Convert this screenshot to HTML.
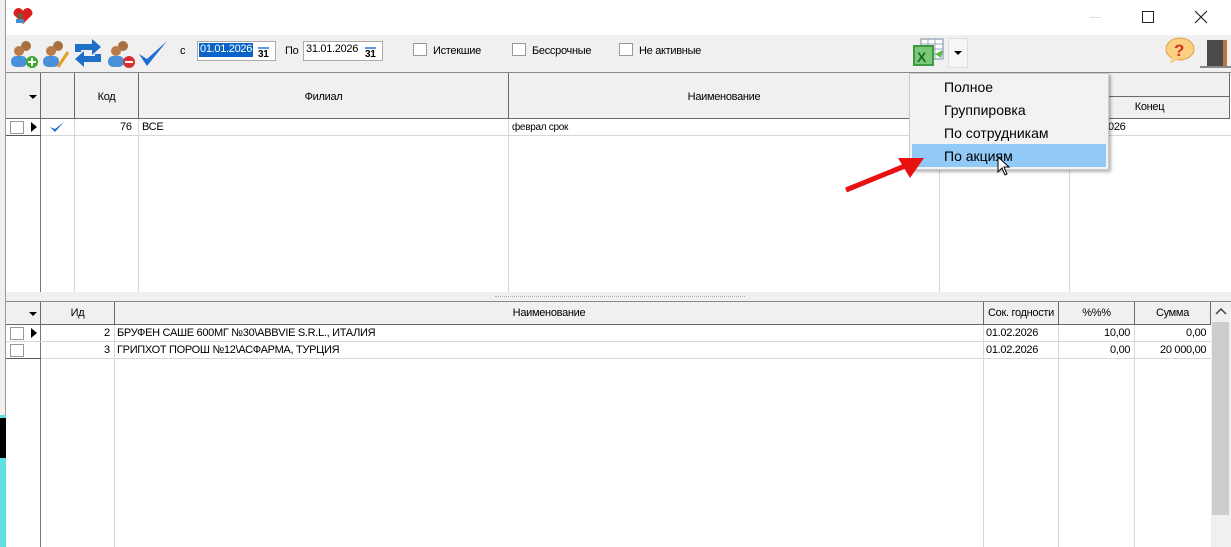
<!DOCTYPE html>
<html><head><meta charset="utf-8"><style>
*{box-sizing:border-box;margin:0;padding:0}
body{width:1231px;height:547px;overflow:hidden;background:#fff;font-family:"Liberation Sans",sans-serif;font-size:11px;color:#000;position:relative}
.a{position:absolute}
.vl{position:absolute;width:1px;background:#d8d8d8}
.hd{position:absolute;background:#f0f0f0;border-right:1px solid #6a6a6a;border-bottom:1px solid #6a6a6a;text-align:center;font-size:11px;letter-spacing:-0.3px}
.t{position:absolute;white-space:nowrap;font-size:11px;letter-spacing:-0.3px}
.cb{position:absolute;width:14px;height:13px;border:1px solid #999;background:#fff}
.tri{position:absolute;width:0;height:0;border-top:5px solid transparent;border-bottom:5px solid transparent;border-left:6px solid #000}
.dn{position:absolute;width:0;height:0;border-left:4px solid transparent;border-right:4px solid transparent;border-top:4px solid #000}
</style></head><body>
<div class="a" style="left:0;top:0;width:6px;height:547px;background:#f0f0f0;border-right:1px solid #999"></div>
<div class="a" style="left:0;top:415px;width:6px;height:132px;background:#5ee0e0"></div>
<div class="a" style="left:0;top:418px;width:6px;height:40px;background:#000"></div>
<svg class="a" style="left:12px;top:7px" width="22" height="18"><path d="M11 17 L2 8 A4.5 4.5 0 0 1 11 4 A4.5 4.5 0 0 1 20 8 Z" fill="#d82020"/><circle cx="8" cy="9" r="3" fill="#7a5a3a"/><rect x="4" y="12" width="8" height="4" fill="#4a8ad0"/></svg>
<div class="a" style="left:1090px;top:17px;width:11px;height:1px;background:#ddd"></div>
<div class="a" style="left:1142px;top:11px;width:12px;height:12px;border:1px solid #222"></div>
<svg class="a" style="left:1194px;top:10px" width="14" height="14"><path d="M1 1L13 13M13 1L1 13" stroke="#222" stroke-width="1.2"/></svg>
<div class="a" style="left:6px;top:35px;width:1225px;height:38px;background:#f0f0f0"></div>
<svg class="a" style="left:8px;top:38px" width="160" height="32">
<g><circle cx="18" cy="8" r="5" fill="#a87040"/><circle cx="11" cy="13" r="5" fill="#b87a48"/><rect x="3" y="18" width="16" height="11" rx="5" fill="#4a90d8"/><circle cx="24" cy="24" r="6" fill="#3aaa30"/><path d="M20 24h8M24 20v8" stroke="#fff" stroke-width="2"/></g>
<g transform="translate(32,0)"><circle cx="18" cy="8" r="5" fill="#a87040"/><circle cx="11" cy="13" r="5" fill="#b87a48"/><rect x="3" y="18" width="16" height="11" rx="5" fill="#4a90d8"/><path d="M18 29 L28 14" stroke="#e0a020" stroke-width="3"/></g>
<g transform="translate(65,0)"><path d="M2 14 V6 H19 V1 L28 9 L19 17 V12 H8 V14Z M28 16 V24 H11 V29 L2 21 L11 13 V18 H22 V16Z" fill="#1e70c8"/></g>
<g transform="translate(97,0)"><circle cx="18" cy="8" r="5" fill="#a87040"/><circle cx="11" cy="13" r="5" fill="#b87a48"/><rect x="3" y="18" width="16" height="11" rx="5" fill="#4a90d8"/><circle cx="24" cy="24" r="6" fill="#d83030"/><path d="M20 24h8" stroke="#fff" stroke-width="2"/></g>
<g transform="translate(130,0)"><path d="M1 16 L9 28 L29 3 L9 21 Z" fill="#1e6ed0"/></g>
</svg>
<div class="t" style="left:180px;top:45px">с</div>
<div class="a" style="left:197px;top:41px;width:79px;height:20px;background:#fff;border:1px solid #aaa"></div>
<div class="a" style="left:199px;top:43px;width:54px;height:14px;background:#0a64c8"></div>
<div class="t" style="left:200px;top:43px;color:#fff">01.01.2026</div>
<div class="t" style="left:258px;top:47px;font-weight:bold;font-size:10px;border-top:2px solid #5a9ad8">31</div>
<div class="t" style="left:285px;top:45px">По</div>
<div class="a" style="left:303px;top:41px;width:80px;height:20px;background:#fff;border:1px solid #aaa"></div>
<div class="t" style="left:306px;top:43px">31.01.2026</div>
<div class="t" style="left:365px;top:47px;font-weight:bold;font-size:10px;border-top:2px solid #5a9ad8">31</div>
<div class="cb" style="left:413px;top:43px"></div><div class="t" style="left:433px;top:45px">Истекшие</div>
<div class="cb" style="left:512px;top:43px"></div><div class="t" style="left:532px;top:45px">Бессрочные</div>
<div class="cb" style="left:619px;top:43px"></div><div class="t" style="left:639px;top:45px">Не активные</div>
<svg class="a" style="left:911px;top:38px" width="34" height="30"><rect x="10" y="1" width="22" height="20" fill="#fff" stroke="#7a8aa0"/><path d="M10 6h22M10 11h22M10 16h22M17 1v20M24 1v20" stroke="#9aaac0"/><rect x="2" y="7" width="21" height="21" fill="#3c9a40"/><rect x="4" y="9" width="17" height="17" fill="#7cc87a"/><text x="6" y="24" font-size="14" font-weight="bold" fill="#1e6a22" font-family="Liberation Sans">X</text><path d="M24 16 L32 12 L30 20Z" fill="#5ab84a"/></svg>
<div class="a" style="left:948px;top:38px;width:20px;height:30px;border:1px solid #ddd;background:#f6f6f6"></div>
<div class="dn" style="left:954px;top:51px"></div>
<svg class="a" style="left:1164px;top:36px" width="32" height="30"><ellipse cx="16" cy="13" rx="14" ry="11" fill="#f8d080" stroke="#e0a040"/><path d="M8 21 L6 28 L14 23Z" fill="#f8d080"/><text x="10" y="20" font-size="17" font-weight="bold" fill="#d83020" font-family="Liberation Sans">?</text></svg>
<div class="a" style="left:1207px;top:40px;width:20px;height:28px;background:#4a4a4a;border-right:4px solid #b07a40"></div>
<div class="a" style="left:1200px;top:66px;width:31px;height:2px;background:#888"></div>
<div class="a" style="left:6px;top:72px;width:1225px;height:1px;background:#888"></div>
<div class="hd" style="left:6px;top:73px;width:35px;height:46px"></div><div class="dn" style="left:29px;top:95px"></div>
<div class="hd" style="left:41px;top:73px;width:34px;height:46px"></div>
<div class="hd" style="left:75px;top:73px;width:64px;height:46px;padding-top:18px">Код</div>
<div class="hd" style="left:139px;top:73px;width:370px;height:46px;padding-top:18px">Филиал</div>
<div class="hd" style="left:509px;top:73px;width:431px;height:46px;padding-top:18px">Наименование</div>
<div class="hd" style="left:940px;top:73px;width:290px;height:24px"></div>
<div class="hd" style="left:940px;top:97px;width:130px;height:22px"></div>
<div class="hd" style="left:1070px;top:97px;width:160px;height:22px;padding-top:4px">Конец</div>
<div class="vl" style="left:40px;top:119px;height:173px;background:#777"></div>
<div class="vl" style="left:74px;top:119px;height:173px"></div>
<div class="vl" style="left:138px;top:119px;height:173px"></div>
<div class="vl" style="left:508px;top:119px;height:173px"></div>
<div class="vl" style="left:939px;top:119px;height:173px"></div>
<div class="vl" style="left:1069px;top:119px;height:173px"></div>
<div class="a" style="left:6px;top:135px;width:1225px;height:1px;background:#d8d8d8"></div>
<div class="a" style="left:6px;top:135px;width:35px;height:1px;background:#555"></div>
<div class="cb" style="left:10px;top:121px"></div><div class="tri" style="left:31px;top:122px"></div>
<svg class="a" style="left:49px;top:121px" width="16" height="12"><path d="M1 6 L6 11 L15 1 L6 8Z" fill="#1e6ed0"/></svg>
<div class="t" style="left:120px;top:121px">76</div>
<div class="t" style="left:142px;top:121px">ВСЕ</div>
<div class="t" style="left:512px;top:122px;font-size:10px">феврал срок</div>
<div class="t" style="left:1108px;top:121px">026</div>
<div class="a" style="left:6px;top:292px;width:1225px;height:10px;background:#f0f0f0;border-bottom:1px solid #888"></div>
<div class="a" style="left:495px;top:296px;width:250px;height:2px;border-top:1px dotted #aaa"></div>
<div class="hd" style="left:6px;top:302px;width:35px;height:23px"></div><div class="dn" style="left:29px;top:312px"></div>
<div class="hd" style="left:41px;top:302px;width:74px;height:23px;padding-top:5px">Ид</div>
<div class="hd" style="left:115px;top:302px;width:869px;height:23px;padding-top:5px">Наименование</div>
<div class="hd" style="left:984px;top:302px;width:75px;height:23px;padding-top:5px">Сок. годности</div>
<div class="hd" style="left:1059px;top:302px;width:76px;height:23px;padding-top:5px">%%%</div>
<div class="hd" style="left:1135px;top:302px;width:76px;height:23px;padding-top:5px">Сумма</div>
<div class="a" style="left:1211px;top:302px;width:20px;height:245px;background:#f0f0f0"></div>
<div class="a" style="left:1212px;top:322px;width:17px;height:193px;background:#cdcdcd"></div>
<svg class="a" style="left:1215px;top:308px" width="12" height="8"><path d="M1 6 L6 1 L11 6" stroke="#444" fill="none" stroke-width="1.5"/></svg>
<div class="vl" style="left:40px;top:325px;height:222px;background:#777"></div>
<div class="vl" style="left:114px;top:325px;height:222px"></div>
<div class="vl" style="left:983px;top:325px;height:222px"></div>
<div class="vl" style="left:1058px;top:325px;height:222px"></div>
<div class="vl" style="left:1134px;top:325px;height:222px"></div>
<div class="a" style="left:6px;top:341px;width:1205px;height:1px;background:#d8d8d8"></div>
<div class="a" style="left:6px;top:358px;width:1205px;height:1px;background:#d8d8d8"></div>
<div class="a" style="left:6px;top:358px;width:35px;height:1px;background:#555"></div>
<div class="cb" style="left:10px;top:327px"></div><div class="tri" style="left:31px;top:328px"></div>
<div class="cb" style="left:10px;top:344px"></div>
<div class="t" style="left:104px;top:327px">2</div>
<div class="t" style="left:117px;top:327px">БРУФЕН САШЕ 600МГ №30\ABBVIE S.R.L., ИТАЛИЯ</div>
<div class="t" style="left:986px;top:327px">01.02.2026</div>
<div class="t" style="left:1104px;top:327px">10,00</div>
<div class="t" style="left:1186px;top:327px">0,00</div>
<div class="t" style="left:104px;top:344px">3</div>
<div class="t" style="left:117px;top:344px">ГРИПХОТ ПОРОШ №12\АСФАРМА, ТУРЦИЯ</div>
<div class="t" style="left:986px;top:344px">01.02.2026</div>
<div class="t" style="left:1110px;top:344px">0,00</div>
<div class="t" style="left:1160px;top:344px">20 000,00</div>
<div class="a" style="left:909px;top:73px;width:200px;height:97px;background:#f2f2f2;border:1px solid #ccc;box-shadow:2px 2px 3px rgba(0,0,0,0.3)"></div>
<div class="a" style="left:912px;top:144px;width:194px;height:23px;background:#91c9f7"></div>
<div class="t" style="left:944px;top:79px;font-size:14px;letter-spacing:0">Полное</div>
<div class="t" style="left:944px;top:102px;font-size:14px;letter-spacing:0">Группировка</div>
<div class="t" style="left:944px;top:125px;font-size:14px;letter-spacing:0">По сотрудникам</div>
<div class="t" style="left:944px;top:148px;font-size:14px;letter-spacing:0">По акциям</div>
<svg class="a" style="left:997px;top:156px" width="14" height="22"><path d="M1 1 L1 16 L5 12 L8 19 L10 18 L7 11 L12 11 Z" fill="#fff" stroke="#000"/></svg>
<svg class="a" style="left:840px;top:150px" width="90" height="45"><path d="M6 40 L65 16" stroke="#e81010" stroke-width="5"/><path d="M84 8 L58 8 L70 28 Z" fill="#e81010"/></svg>
</body></html>
